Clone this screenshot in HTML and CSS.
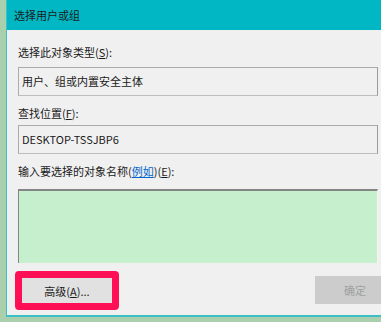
FILE: index.html
```html
<!DOCTYPE html>
<html lang="zh-CN">
<head>
    <meta charset="UTF-8">
    <title>选择用户或组</title>
    <link rel="stylesheet" href="styles.css">
</head>
<body>
    <div class="dialog">
        <div class="titlebar">选择用户或组</div>
        <div class="content">
            <div class="label first">选择此对象类型(<u>S</u>):</div>
            <div class="field">用户、组或内置安全主体</div>
            <div class="label">查找位置(<u>F</u>):</div>
            <div class="field">DESKTOP-TSSJBP6</div>
            <div class="label">输入要选择的对象名称(<a href="#" class="link">例如</a>)(<u>E</u>):</div>
            <div class="names"></div>
            <div class="footer">
                <div class="highlight">
                    <button class="btn">高级(<u>A</u>)...</button>
                </div>
                <button class="btn ok" disabled>确定</button>
            </div>
        </div>
    </div>
</body>
</html>
```

FILE: styles.css
```css
body {
    margin: 0;
    height: 322px;
    overflow: hidden;
    background-color: #a9cfad; /* desktop behind the dialog */
    font-family: "Noto Sans CJK SC", "Noto Sans", sans-serif;
    font-size: 11px;
    color: #1a1a1a;
}
.dialog {
    margin-left: 6px;
    overflow: hidden;
    background-color: #f0f0f0;
    border-left: 1px solid #3cbfc6;
    border-bottom: 2px solid #3cbfc6;
}
.titlebar {
    height: 30px;
    line-height: 31px;
    padding-left: 7px;
    background-color: #00b7c3;
    color: #1b1b1b;
}
.content {
    padding: 0 0 5px 11px;
}
.label {
    line-height: 16px;
    margin-top: 9px;
}
.label.first {
    margin-top: 14px;
}
.label u {
    text-decoration-thickness: 1px;
}
.link {
    color: #0066cc;
    text-decoration: underline;
}
.field {
    box-sizing: border-box;
    width: 360px;
    height: 29px;
    margin-top: 4px;
    padding: 5px 3px;
    line-height: 16px;
    border: 1px solid #ababab;
    border-right-color: #9a9a9a;
    border-bottom-color: #bdbdbd;
}
.label.first + .field {
    margin-top: 7px;
}
.names {
    box-sizing: border-box;
    width: 360px;
    height: 74px;
    margin-top: 10px;
    background-color: #c6efce;
    border-top: 2px solid #858585;
    border-left: 1px solid #858585;
    border-right: 1px solid #f4f4f4;
}
.footer {
    display: flex;
    align-items: flex-start;
    margin-top: 8px;
}
.highlight {
    flex: none;
    margin-left: -3px;
    border: 7px solid #ff0f55;
    border-radius: 4px;
    display: flex;
}
.btn {
    flex: none;
    width: 90px;
    height: 25px;
    padding: 0;
    border: none;
    background-color: #e1e1e1;
    font-family: inherit;
    font-size: 11px;
    color: #1a1a1a;
}
.ok {
    margin-left: 196px;
    margin-top: 5px;
    width: 80px;
    height: 28px;
    background-color: #cccccc;
    color: #a0a0a0;
}
```
